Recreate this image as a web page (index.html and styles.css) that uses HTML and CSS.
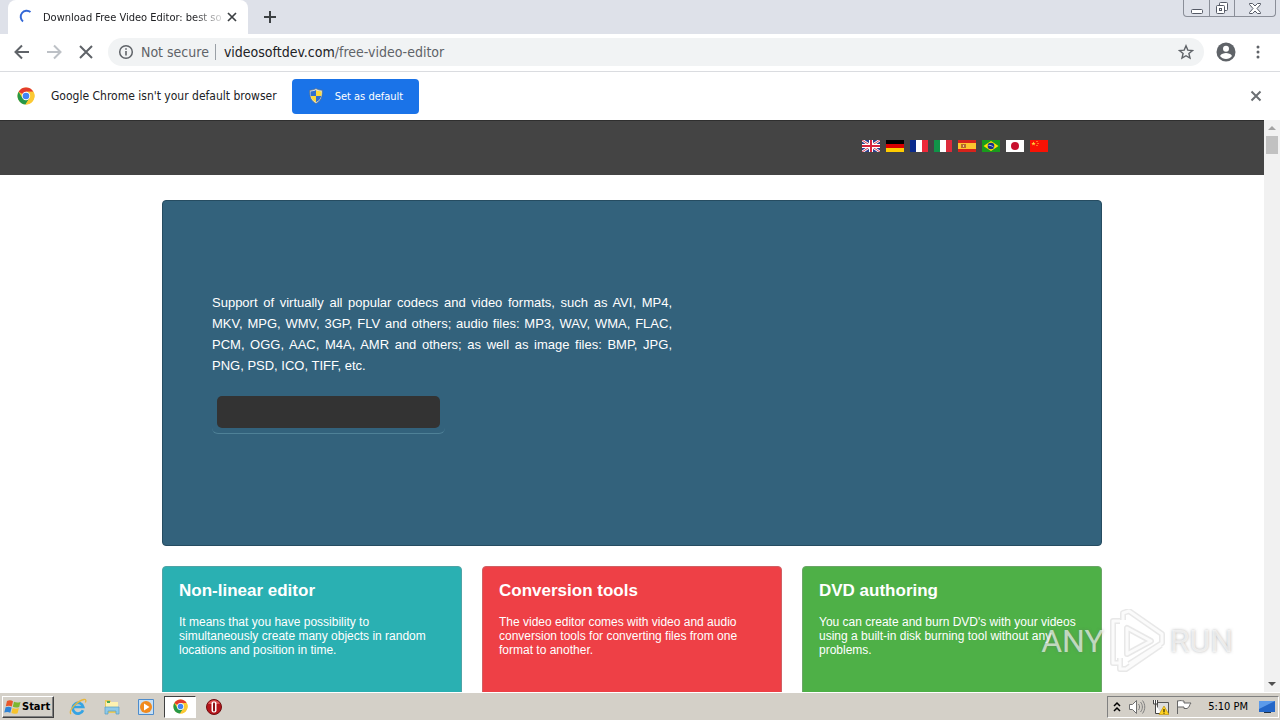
FILE: index.html
```html
<!DOCTYPE html>
<html lang="en">
<head>
<meta charset="utf-8">
<meta name="viewport" content="width=device-width, initial-scale=1">
<title>Download Free Video Editor: best so</title>
<link rel="stylesheet" href="styles.css">
</head>
<body>
<svg class="defs" aria-hidden="true">
  <symbol id="chrome" viewBox="0 0 18 18">
    <circle cx="9" cy="9" r="8.5" fill="#fbc934"/>
    <path d="M9 9 1.6 4.8A8.5 8.5 0 0 1 16.4 4.8H9z" fill="#e33b2e"/>
    <path d="M1.6 4.8A8.5 8.5 0 0 0 8.5 17.5L12.6 11 9 9 5.4 11z" fill="#279847"/>
    <path d="M9 4.8h7.4A8.5 8.5 0 0 1 8.5 17.5L12.6 11z" fill="#fbc934"/>
    <circle cx="9" cy="9" r="4.2" fill="#fff"/><circle cx="9" cy="9" r="3.3" fill="#4285f4"/>
  </symbol>
</svg>

<header class="tabstrip">
  <div class="tab">
    <svg class="spinner" viewBox="0 0 16 16" width="16" height="16"><path d="M4 12.500A5.800 5.800 0 0 1 11.500 3" fill="none" stroke="#3367d6" stroke-width="2"/></svg>
    <span class="tab-title">Download Free Video Editor: best so</span>
    <button class="icon-button" aria-label="Close tab"><svg viewBox="0 0 12 12" width="12" height="12"><path d="M2 2l8 8M10 2l-8 8" stroke="#3c4043" stroke-width="1.7"/></svg></button>
  </div>
  <button class="icon-button new-tab" aria-label="New tab"><svg viewBox="0 0 14 14" width="14" height="14"><path d="M7 1v12M1 7h12" stroke="#3c4043" stroke-width="2"/></svg></button>
  <div class="window-controls">
    <button aria-label="Minimize"><svg viewBox="0 0 14 14" width="14" height="14"><rect x="1.500" y="8.500" width="11" height="4" rx="1" fill="#fff" stroke="#555a66"/></svg></button>
    <button aria-label="Restore"><svg viewBox="0 0 14 14" width="14" height="14"><g fill="#fff" stroke="#555a66"><rect x="4.500" y="1.500" width="8" height="8" rx="1"/><rect x="1.500" y="4.500" width="8" height="8" rx="1"/><rect x="4.500" y="7.500" width="2" height="2"/></g></svg></button>
    <button class="wide" aria-label="Close"><svg viewBox="0 0 14 14" width="14" height="14"><path d="M1.500 2.500h3L7 5l2.500-2.500h3v1L9 7.500l3.500 4v1h-3L7 10l-2.500 2.500h-3v-1L5 7.500l-3.500-4z" fill="#fff" stroke="#555a66"/></svg></button>
  </div>
</header>

<nav class="toolbar" aria-label="Browser">
  <button class="icon-button" aria-label="Back"><svg viewBox="0 0 16 16" width="16" height="16"><path d="M15 8H2M8 1.500 1.500 8 8 14.500" fill="none" stroke="#5f6368" stroke-width="2"/></svg></button>
  <button class="icon-button" aria-label="Forward"><svg viewBox="0 0 16 16" width="16" height="16"><path d="M1 8h13M8 1.500 14.500 8 8 14.500" fill="none" stroke="#bdc1c6" stroke-width="2"/></svg></button>
  <button class="icon-button" aria-label="Stop loading"><svg viewBox="0 0 16 16" width="16" height="16"><path d="M2 2l12 12M14 2 2 14" stroke="#5f6368" stroke-width="2"/></svg></button>
  <div class="omnibox">
    <svg viewBox="0 0 16 16" width="16" height="16"><circle cx="8" cy="8" r="6.300" fill="none" stroke="#5f6368" stroke-width="1.500"/><path d="M8 7v4.500M8 4.200v1.600" stroke="#5f6368" stroke-width="1.600"/></svg>
    <span class="security">Not secure</span>
    <span class="url"><b>videosoftdev.com</b>/free-video-editor</span>
    <button class="icon-button" aria-label="Bookmark this page"><svg viewBox="0 0 16 16" width="16" height="16"><path d="M8 1.800l1.800 4.300 4.700.4-3.600 3 1.100 4.600L8 11.700 4 14.100l1.100-4.600-3.600-3 4.700-.4z" fill="none" stroke="#5f6368" stroke-width="1.400"/></svg></button>
  </div>
  <button class="icon-button" aria-label="Profile"><svg viewBox="0 0 20 20" width="20" height="20"><circle cx="10" cy="10" r="9.500" fill="#5f6368"/><circle cx="10" cy="6.800" r="3" fill="#fff"/><path d="M4 14c1-2.300 4-3 6-3s5 .7 6 3c-1.500 2-3.500 3-6 3s-4.500-1-6-3z" fill="#fff"/></svg></button>
  <button class="icon-button" aria-label="Menu"><svg viewBox="0 0 16 16" width="16" height="16" fill="#5f6368"><circle cx="8" cy="3" r="1.500"/><circle cx="8" cy="8" r="1.500"/><circle cx="8" cy="13" r="1.500"/></svg></button>
</nav>

<section class="infobar">
  <svg width="18" height="18"><use href="#chrome"/></svg>
  <span class="infobar-text">Google Chrome isn't your default browser</span>
  <button class="primary">
    <svg viewBox="0 0 16 16" width="16" height="16"><path d="M8 .5c2 1.300 4 1.700 6.300 1.700C14.500 9 13 13 8 15.500 3 13 1.500 9 1.700 2.200 4 2.200 6 1.800 8 .5z" fill="#dfe5e8" stroke="#5b6a75" stroke-width=".7"/><path d="M8 2v6H2.800c-.3-1.500-.3-3-.2-4.600C4.600 3.400 6.400 3 8 2z" fill="#2f6fd0"/><path d="M8 2v6h5.200c.3-1.500.3-3 .2-4.600C11.400 3.400 9.600 3 8 2z" fill="#fbd93b"/><path d="M8 8v6.300C5 12.800 3.500 10.800 2.800 8z" fill="#fbd93b"/><path d="M8 8v6.300c3-1.500 4.500-3.500 5.200-6.300z" fill="#2f6fd0"/></svg>
    Set as default
  </button>
  <button class="icon-button dismiss" aria-label="Dismiss"><svg viewBox="0 0 12 12" width="12" height="12"><path d="M1.500 1.500l9 9M10.500 1.500l-9 9" stroke="#6b6f73" stroke-width="2"/></svg></button>
</section>

<div class="viewport">
  <main class="page">
    <div class="site-header">
      <div class="container languages">
        <a href="#" aria-label="English"><svg viewBox="0 0 18 12"><path fill="#2b3f8c" d="M0 0h18v12H0z"/><path d="M0 0l18 12M18 0 0 12" stroke="#fff" stroke-width="2.600"/><path d="M0 0l18 12M18 0 0 12" stroke="#d5233c" stroke-width=".9"/><path d="M9 0v12M0 6h18" stroke="#fff" stroke-width="4"/><path d="M9 0v12M0 6h18" stroke="#d5233c" stroke-width="2"/></svg></a>
        <a href="#" aria-label="Deutsch"><svg viewBox="0 0 18 12"><path d="M0 0h18v4H0z"/><path fill="#d90000" d="M0 4h18v4H0z"/><path fill="#fc0" d="M0 8h18v4H0z"/></svg></a>
        <a href="#" aria-label="Français"><svg viewBox="0 0 18 12"><path fill="#0a2a8c" d="M0 0h6v12H0z"/><path fill="#fff" d="M6 0h6v12H6z"/><path fill="#ed2939" d="M12 0h6v12h-6z"/></svg></a>
        <a href="#" aria-label="Italiano"><svg viewBox="0 0 18 12"><path fill="#109448" d="M0 0h6v12H0z"/><path fill="#fff" d="M6 0h6v12H6z"/><path fill="#dc2b3a" d="M12 0h6v12h-6z"/></svg></a>
        <a href="#" aria-label="Español"><svg viewBox="0 0 18 12"><path fill="#d6231c" d="M0 0h18v12H0z"/><path fill="#fdc52e" d="M0 3h18v6H0z"/><path fill="#b96a2a" d="M3 4h5v4H3z"/><path fill="#e9c8a0" d="M5 5h1v2H5z"/></svg></a>
        <a href="#" aria-label="Português"><svg viewBox="0 0 18 12"><path fill="#199b1c" d="M0 0h18v12H0z"/><path fill="#fde100" d="M9 1l7.500 5L9 11 1.500 6z"/><circle cx="9" cy="6" r="3.300" fill="#15308c"/><path d="M6.500 5.300c2 0 3.700.6 5 1.800" stroke="#fff" stroke-width=".7" fill="none"/></svg></a>
        <a href="#" aria-label="日本語"><svg viewBox="0 0 18 12"><path fill="#fff" d="M0 0h18v12H0z"/><circle cx="9" cy="6" r="4" fill="#c8102e"/></svg></a>
        <a href="#" aria-label="中文"><svg viewBox="0 0 18 12"><path fill="#f81204" d="M0 0h18v12H0z"/><path fill="#ffd83a" d="M3.500 1.500l.6 1.500h1.500l-1.200 1 .5 1.500-1.400-.9-1.400.9.500-1.500-1.200-1h1.500zM6.500 1h1v1h-1zM7.500 3h1v1h-1zM6.500 5h1v1h-1z"/></svg></a>
      </div>
    </div>
    <div class="container">
      <section class="hero">
        <p>Support of virtually all popular codecs and video formats, such as AVI, MP4, MKV, MPG, WMV, 3GP, FLV and others; audio files: MP3, WAV, WMA, FLAC, PCM, OGG, AAC, M4A, AMR and others; as well as image files: BMP, JPG, PNG, PSD, ICO, TIFF, etc.</p>
        <div class="download"><button aria-label="Download"></button></div>
      </section>
      <div class="cards">
        <article class="card teal"><h2>Non-linear editor</h2><p>It means that you have possibility to simultaneously create many objects in random locations and position in time.</p></article>
        <article class="card red"><h2>Conversion tools</h2><p>The video editor comes with video and audio conversion tools for converting files from one format to another.</p></article>
        <article class="card green"><h2>DVD authoring</h2><p>You can create and burn DVD's with your videos using a built-in disk burning tool without any problems.</p></article>
      </div>
    </div>
  </main>
  <div class="scrollbar" aria-hidden="true">
    <svg viewBox="0 0 16 16" width="16" height="16"><path d="M4 10h8L8 6z" fill="#a3a3a3"/></svg>
    <div class="thumb"></div>
    <svg class="down" viewBox="0 0 16 16" width="16" height="16"><path d="M4 6h8l-4 4z" fill="#505050"/></svg>
  </div>
  <div class="watermark">
    <span>ANY</span>
    <svg viewBox="0 0 60 64" width="60" height="64"><g fill="none" stroke-linejoin="round"><g stroke="#bcbcbc" stroke-opacity=".35" stroke-width="6"><path d="M20 19v26l24-13z"/><path d="M16 11V4l6-2 33 23v9L22 55M13 12H6v42h7M13 49v11h6l35-24"/></g><g stroke="#fff" stroke-opacity=".8" stroke-width="3"><path d="M20 19v26l24-13z"/><path d="M16 11V4l6-2 33 23v9L22 55M13 12H6v42h7M13 49v11h6l35-24"/></g></g></svg>
    <span>RUN</span>
  </div>
</div>

<footer class="taskbar">
  <button class="start"><svg viewBox="0 0 18 16" width="18" height="16"><path d="M3 2c2-1 4-1 6 .2L7.800 7.500c-2-1.200-4-1-6-.2z" fill="#e8572a"/><path d="M10 2.700c2 1 4 1 6.500.2L15.200 8c-2.300.8-4.400.8-6.400-.2z" fill="#7cb72f"/><path d="M1.600 8.300c2-.8 4-.8 6 .2l-1.300 5.200c-2-1-4-1-6-.1z" fill="#2e83d6"/><path d="M8.600 8.900c2 1 4 1 6.300.2l-1.300 5.200c-2.200.8-4.200.7-6.200-.2z" fill="#f7c32c"/></svg>Start</button>
  <button class="launch" aria-label="Internet Explorer"><svg viewBox="0 0 18 18" width="18" height="18"><path d="M14 12.200A5.300 5.300 0 1 1 14.200 9H5" fill="none" stroke="#35a4e4" stroke-width="2.700"/><path d="M2 16C-1 13 8 3 15 1.500c2-.3 2.300 1 1.300 3" fill="none" stroke="#e8b73c" stroke-width="1.300"/></svg></button>
  <button class="launch" aria-label="Explorer"><svg viewBox="0 0 18 18" width="18" height="18"><path d="M2 2h5l1 2h7v11H2z" fill="#e9c95c"/><path d="M3 4h12v7H3z" fill="#fff2b0"/><path d="M4 3h3v2H4z" fill="#49a855"/><path d="M2 9h14v7h-3v-3H5v3H2z" fill="#8fc9e8" stroke="#559fc5" stroke-width=".7"/></svg></button>
  <button class="launch" aria-label="Media Player"><svg viewBox="0 0 18 18" width="18" height="18"><path d="M1.500 1.500h15v15h-15z" fill="#c8e0f4" stroke="#4d8ccc"/><circle cx="9" cy="9" r="6" fill="#f18a1d"/><path d="M7 5.500v7L12.500 9z" fill="#fff"/></svg></button>
  <button class="launch active" aria-label="Chrome"><svg width="15" height="15" viewBox="0 0 18 18"><use href="#chrome"/></svg></button>
  <button class="launch" aria-label="Opera"><svg viewBox="0 0 18 18" width="18" height="18"><circle cx="9" cy="9" r="7.500" fill="#b5151b" stroke="#6f0d10"/><path d="M3 6c2-5 10-5 12 0z" fill="#d55"/><rect x="6.500" y="3.500" width="5" height="11" rx="2" fill="#fff"/><rect x="8" y="4.500" width="2" height="9" rx="1" fill="#8d1216"/></svg></button>
  <div class="tray">
    <svg viewBox="0 0 8 16" width="8" height="16"><path d="M1 7l3-3 3 3M1 12l3-3 3 3" fill="none" stroke="#000" stroke-width="1.500"/></svg>
    <svg viewBox="0 0 18 16" width="18" height="16"><path d="M1.500 5.500h3l4-4v13l-4-4h-3z" fill="#fff" stroke="#707070"/><path d="M10.500 5c1.500 2 1.500 4 0 6M12.500 3c2.500 3 2.500 7 0 10M14.500 1.500c3 4 3 9 0 13" fill="none" stroke="#808080"/></svg>
    <svg viewBox="0 0 16 16" width="16" height="16"><path d="M4.500 3.500h11v11h-11z" fill="#ddd" stroke="#555"/><path d="M.5 1v4h4V1M2.500 1v4M2.500 5v9.500H8" fill="#fff" stroke="#444"/><path d="M11 7l5 8.500H6z" fill="#ffd21f" stroke="#b98b00" stroke-width=".6"/><path d="M11 10v3M11 13.700v1" stroke="#000"/></svg>
    <svg viewBox="0 0 16 16" width="16" height="16"><path d="M1.500 15V1.500M2 2c3-1 4 0 6 0v2h7c-2 2-1 4-4 5.500H8V8H2" fill="#fff" stroke="#666"/></svg>
    <time>5:10 PM</time>
    <svg viewBox="0 0 18 16" width="18" height="16"><path d="M1 2h16v11H1z" fill="#2467c8"/><path d="M1 2h16L1 10z" fill="#5c9bea"/><path d="M6 13h7v1H6z" fill="#234"/></svg>
  </div>
</footer>
</body>
</html>
```
FILE: styles.css
```css
* { box-sizing: border-box; }

body {
  margin: 0;
  height: 100vh;
  display: flex;
  flex-direction: column;
  overflow: hidden;
  background: #fff;
  color: #202124;
  font-family: "DejaVu Sans Condensed", "Noto Sans", sans-serif;
  font-size: 12px;
}

button {
  padding: 0;
  border: 0;
  background: none;
  color: inherit;
  font: inherit;
}

svg { display: block; flex: none; }

.defs { position: absolute; width: 0; height: 0; }

.icon-button { display: grid; place-items: center; flex: none; }

/* Browser chrome */
.tabstrip {
  display: flex;
  align-items: flex-start;
  flex: none;
  height: 34px;
  padding-left: 8px;
  background: #dee1e9;
}

.tab {
  display: flex;
  align-items: center;
  width: 240px;
  height: 34px;
  padding: 0 10px 0 11px;
  border-radius: 8px 8px 0 0;
  background: #fff;
}

.tab-title {
  flex: 1;
  margin: 0 4px 0 8px;
  overflow: hidden;
  white-space: nowrap;
  font-size: 11px;
  mask-image: linear-gradient(to right, #000 150px, transparent 184px);
}

.new-tab { height: 34px; margin-left: 15px; }

.window-controls {
  display: flex;
  margin: 0 4px 0 auto;
  border: 1px solid #8a8e98;
  border-top: 0;
  border-radius: 0 0 4px 4px;
}

.window-controls button {
  display: grid;
  place-items: center;
  width: 25px;
  height: 16px;
}

.window-controls button + button { border-left: 1px solid #8a8e98; }
.window-controls .wide { width: 41px; }

.toolbar {
  display: flex;
  align-items: center;
  flex: none;
  gap: 16px;
  height: 38px;
  padding: 0 14px 2px;
  border-bottom: 1px solid #dadce0;
}

.toolbar > .icon-button:last-child { margin-left: -2px; }

.omnibox {
  display: flex;
  align-items: center;
  flex: 1;
  height: 28px;
  margin: 0 -4px 0 -2px;
  padding: 0 10px;
  border-radius: 14px;
  background: #f1f3f4;
  font-size: 14px;
  color: #5f6368;
}

.security {
  margin: 0 8px 0 7px;
  padding-right: 6px;
  border-right: 1px solid #9aa0a6;
}

.url { flex: 1; }
.url b { font-weight: 400; color: #202124; }

.infobar {
  display: flex;
  align-items: center;
  flex: none;
  height: 48px;
  padding: 0 18px 0 17px;
}

.infobar-text { margin: 0 15px 0 16px; }

.primary {
  display: flex;
  align-items: center;
  gap: 11px;
  height: 35px;
  padding: 0 16px;
  border-radius: 4px;
  background: #1a73e8;
  color: #fff;
  font-size: 11px;
}

.dismiss { margin-left: auto; }

/* Web page */
.viewport {
  position: relative;
  display: flex;
  flex: 1;
  min-height: 0;
  font-family: "Liberation Sans", Arial, sans-serif;
}

.page { flex: 1; overflow: hidden; }

.container { max-width: 940px; margin: 0 auto; }

.site-header {
  padding: 19px 0 23px;
  border-top: 1px solid #2f2f2f;
  background: #444;
}

.languages {
  display: flex;
  justify-content: flex-end;
  gap: 6px;
  padding-right: 54px;
}

.languages svg { width: 18px; height: 12px; }

.hero {
  height: 346px;
  margin: 25px 0 20px;
  padding: 91px 49px 0;
  border: 1px solid #264c61;
  border-radius: 4px;
  background: #33627c;
  color: #fff;
}

.hero p {
  max-width: 460px;
  margin: 0 0 15px;
  font-size: 13px;
  line-height: 21px;
  text-align: justify;
}

.download {
  width: 233px;
  padding: 5px;
  border-bottom: 1px solid #4f8197;
  border-radius: 6px;
}

.download button {
  display: block;
  width: 100%;
  height: 32px;
  border-radius: 5px;
  background: #333;
}

.cards { display: grid; grid-template-columns: repeat(3, 1fr); gap: 20px; }

.card {
  height: 200px;
  padding: 14px 16px;
  border: 1px solid #8aa5a5;
  border-radius: 4px;
  color: #fff;
}

.card h2 { margin: 0 0 15px; font-size: 17px; line-height: 19px; }
.card p { margin: 0; font-size: 12px; line-height: 14px; }

.teal { background: #2ab0b2; border-color: #4fa3a5; }
.red { background: #ee4046; border-color: #cf6064; }
.green { background: #4eb047; border-color: #6ba567; }

.scrollbar {
  display: flex;
  flex-direction: column;
  width: 16px;
  background: #f1f1f1;
}

.thumb { height: 18px; margin: 0 2px; background: #c1c1c1; }
.scrollbar .down { margin-top: auto; }

.watermark {
  position: absolute;
  right: 47px;
  bottom: 19px;
  display: flex;
  align-items: center;
  gap: 3px;
  color: rgba(255, 255, 255, .65);
  font-family: Roboto, "Liberation Sans", sans-serif;
  font-size: 32px;
  line-height: 64px;
  text-shadow: 0 0 3px rgba(110, 110, 110, .5);
}

/* Taskbar */
.taskbar {
  display: flex;
  align-items: center;
  flex: none;
  height: 28px;
  padding: 0 1px 0 2px;
  border-top: 1px solid #fff;
  background: #d4d0c8;
  color: #000;
  font-size: 11px;
}

.start {
  display: flex;
  align-items: center;
  gap: 0;
  height: 22px;
  margin-right: 8px;
  padding: 0 3px 0 1px;
  border: 1px solid;
  border-color: #fff #404040 #404040 #fff;
  box-shadow: inset -1px -1px #808080;
  font-weight: 700;
}

.launch {
  display: grid;
  place-items: center;
  width: 32px;
  height: 22px;
  margin-right: 2px;
}

.launch.active {
  border: 1px solid;
  border-color: #404040 #fff #fff #404040;
  background: #fff;
}

.tray {
  display: flex;
  align-items: center;
  gap: 7px;
  height: 22px;
  margin-left: auto;
  padding: 0 2px 0 5px;
  border: 1px solid;
  border-color: #808080 #fff #fff #808080;
}

.tray time { margin: 0 3px 0 9px; }
```
